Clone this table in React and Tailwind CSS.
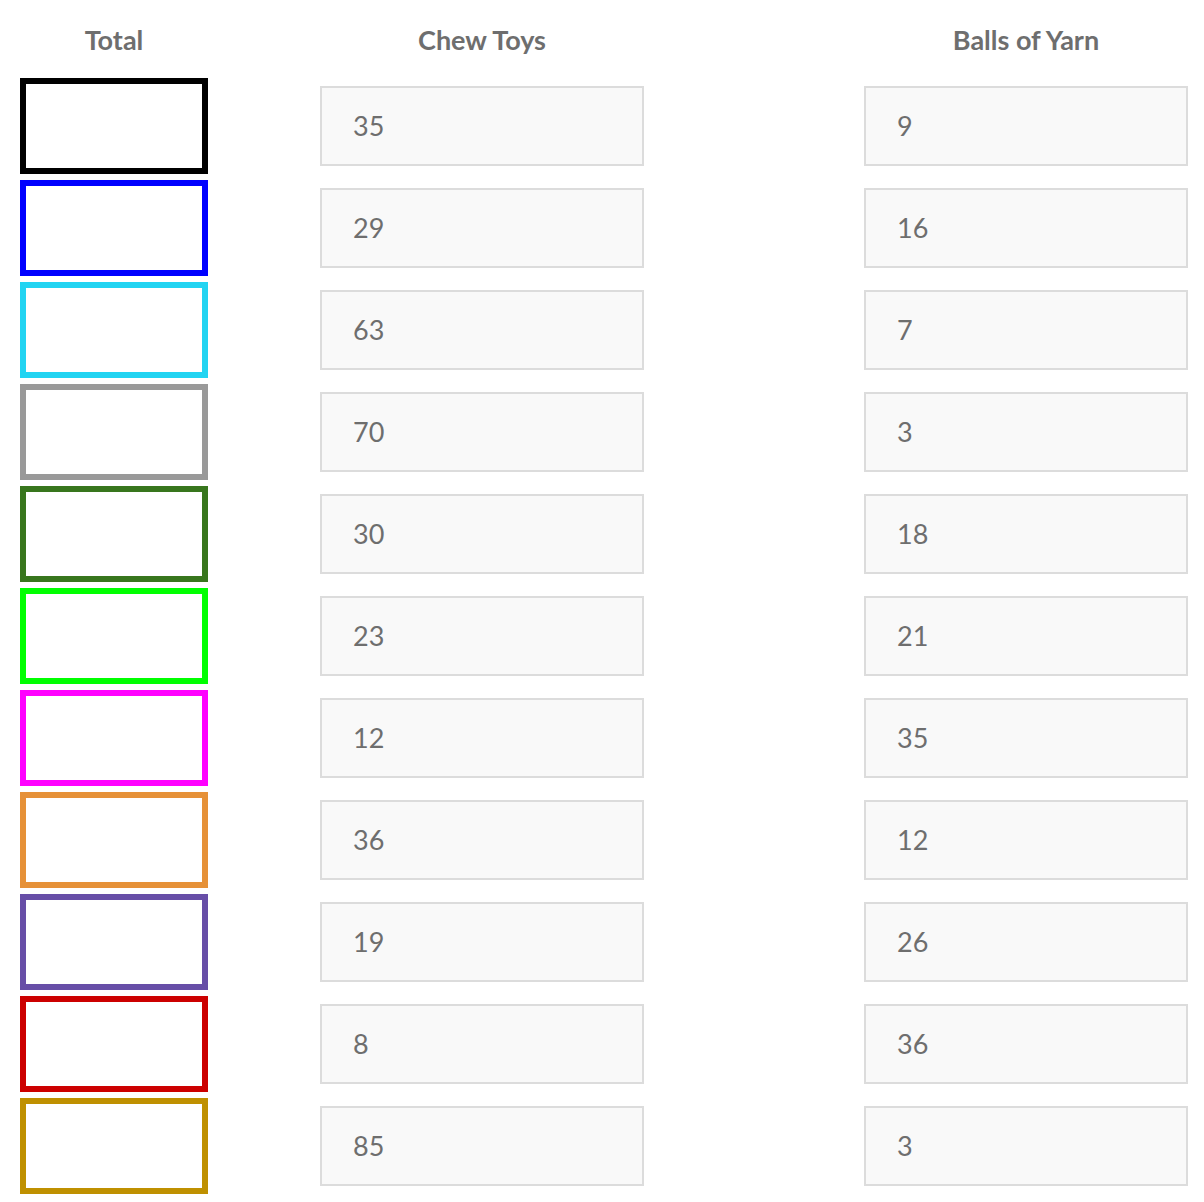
const rows = [
  { c: "border-[#000000]", a: 35, b: 9 },
  { c: "border-[#0000ff]", a: 29, b: 16 },
  { c: "border-[#22d4f2]", a: 63, b: 7 },
  { c: "border-[#999999]", a: 70, b: 3 },
  { c: "border-[#38761d]", a: 30, b: 18 },
  { c: "border-[#00ff00]", a: 23, b: 21 },
  { c: "border-[#ff00ff]", a: 12, b: 35 },
  { c: "border-[#e69138]", a: 36, b: 12 },
  { c: "border-[#674ea7]", a: 19, b: 26 },
  { c: "border-[#cc0000]", a: 8, b: 36 },
  { c: "border-[#bf9000]", a: 85, b: 3 },
];

function Field({ v }) {
  return (
    <div className="w-[324px] h-[80px] border-2 border-[#dcdcdc] bg-[#f9f9f9] flex items-center pl-[31px] text-[27px] text-[#6e6e6e]">
      {v}
    </div>
  );
}

export default function App() {
  return (
    <div
      className="w-[1204px] h-[1202px] bg-white pl-[20px]"
      style={{ fontFamily: "Lato, 'Liberation Sans', sans-serif" }}
    >
      <div className="flex h-[78px] text-[27px] font-bold text-[#6e6e6e] leading-[80px]">
        <div className="w-[188px] text-center">Total</div>
        <div className="w-[324px] ml-[112px] text-center">Chew Toys</div>
        <div className="w-[324px] ml-[220px] text-center">Balls of Yarn</div>
      </div>
      <div className="flex flex-col gap-[6px]">
        {rows.map((r, i) => (
          <div key={i} className="flex items-center h-[96px]">
            <div className={`w-[188px] h-[96px] border-[6px] bg-white ${r.c}`} />
            <div className="ml-[112px]">
              <Field v={r.a} />
            </div>
            <div className="ml-[220px]">
              <Field v={r.b} />
            </div>
          </div>
        ))}
      </div>
    </div>
  );
}
